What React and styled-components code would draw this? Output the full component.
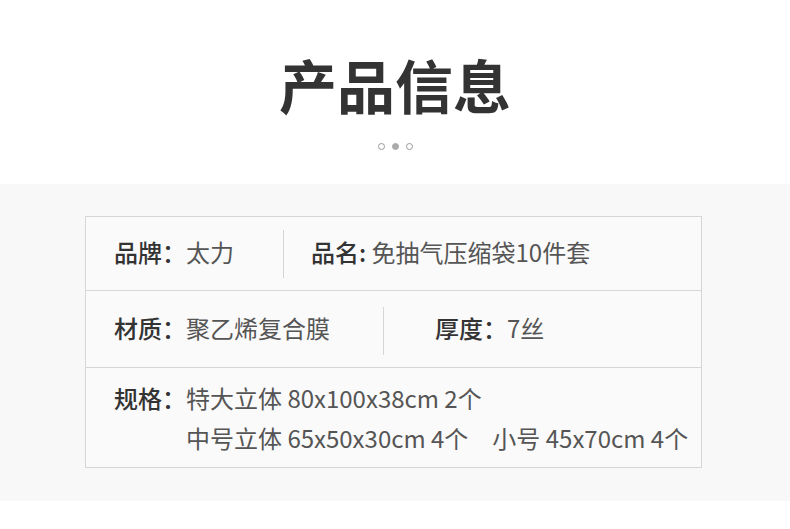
import React from 'react'
import styled, { createGlobalStyle } from 'styled-components'

const GlobalStyle = createGlobalStyle`
  body {
    margin: 0;
    background: #fff;
    font-family: "Noto Sans CJK SC", "Noto Sans", sans-serif;
  }
`

const Page = styled.div`
  width: 790px;
  height: 529px;
  overflow: hidden;
  background: #fff;
`

const Header = styled.header`
  height: 184px;
  display: flex;
  flex-direction: column;
  align-items: center;
  padding-top: 54px;
  box-sizing: border-box;
`

const Title = styled.h1`
  margin: 0;
  font-size: 58px;
  line-height: 60px;
  font-weight: 700;
  color: #333;
`

const Dots = styled.div`
  display: flex;
  gap: 7px;
  margin-top: 29px;
`

const Dot = styled.span`
  width: 7px;
  height: 7px;
  border-radius: 50%;
  box-sizing: border-box;
  border: 1px solid ${p => (p.active ? '#aaa' : '#999')};
  background: ${p => (p.active ? '#aaa' : 'transparent')};
`

const Section = styled.section`
  background: #f8f8f8;
  padding: 32px 0 33px 85px;
`

const Table = styled.div`
  width: 617px;
  box-sizing: border-box;
  border: 1px solid #d6d6d6;
  background: #fafafa;
`

const Row = styled.div`
  display: flex;
  align-items: ${p => (p.top ? 'flex-start' : 'center')};
  height: ${p => p.h}px;
  box-sizing: border-box;
  padding: ${p => (p.top ? '10px 0 0' : '0 0 3px')};
  & + & {
    border-top: 1px solid #d6d6d6;
  }
`

const Cell = styled.div`
  display: flex;
  align-items: flex-start;
  box-sizing: border-box;
  width: ${p => (p.w ? `${p.w}px` : 'auto')};
  flex: ${p => (p.w ? 'none' : '1')};
  padding-left: ${p => p.pl}px;
  font-size: 24px;
  line-height: 40px;
`

const Divider = styled.div`
  width: 1px;
  height: 48px;
  background: #d6d6d6;
  flex: none;
  margin-top: ${p => p.mt || 0}px;
`

const Label = styled.span`
  font-weight: 500;
  color: #333;
  white-space: nowrap;
`

const Value = styled.span`
  color: #555;
  white-space: nowrap;
`

const Lines = styled.div`
  display: flex;
  flex-direction: column;
`

const Gap = styled.span`
  display: inline-block;
  width: ${p => p.w}px;
`

export default function App() {
  return (
    <Page>
      <GlobalStyle />
      <Header>
        <Title>产品信息</Title>
        <Dots>
          <Dot />
          <Dot active />
          <Dot />
        </Dots>
      </Header>
      <Section>
        <Table>
          <Row h={73}>
            <Cell w={197} pl={28}>
              <Label>品牌：</Label>
              <Value>太力</Value>
            </Cell>
            <Divider mt={3} />
            <Cell pl={27}>
              <Label>品名:</Label>
              <Value>&nbsp;免抽气压缩袋10件套</Value>
            </Cell>
          </Row>
          <Row h={77}>
            <Cell w={297} pl={28}>
              <Label>材质：</Label>
              <Value>聚乙烯复合膜</Value>
            </Cell>
            <Divider mt={7} />
            <Cell pl={51}>
              <Label>厚度：</Label>
              <Value>7丝</Value>
            </Cell>
          </Row>
          <Row h={100} top>
            <Cell pl={28}>
              <Label>规格：</Label>
              <Lines>
                <Value>特大立体 80x100x38cm 2个</Value>
                <Value>
                  中号立体 65x50x30cm 4个<Gap w={24} />小号 45x70cm 4个
                </Value>
              </Lines>
            </Cell>
          </Row>
        </Table>
      </Section>
    </Page>
  )
}
